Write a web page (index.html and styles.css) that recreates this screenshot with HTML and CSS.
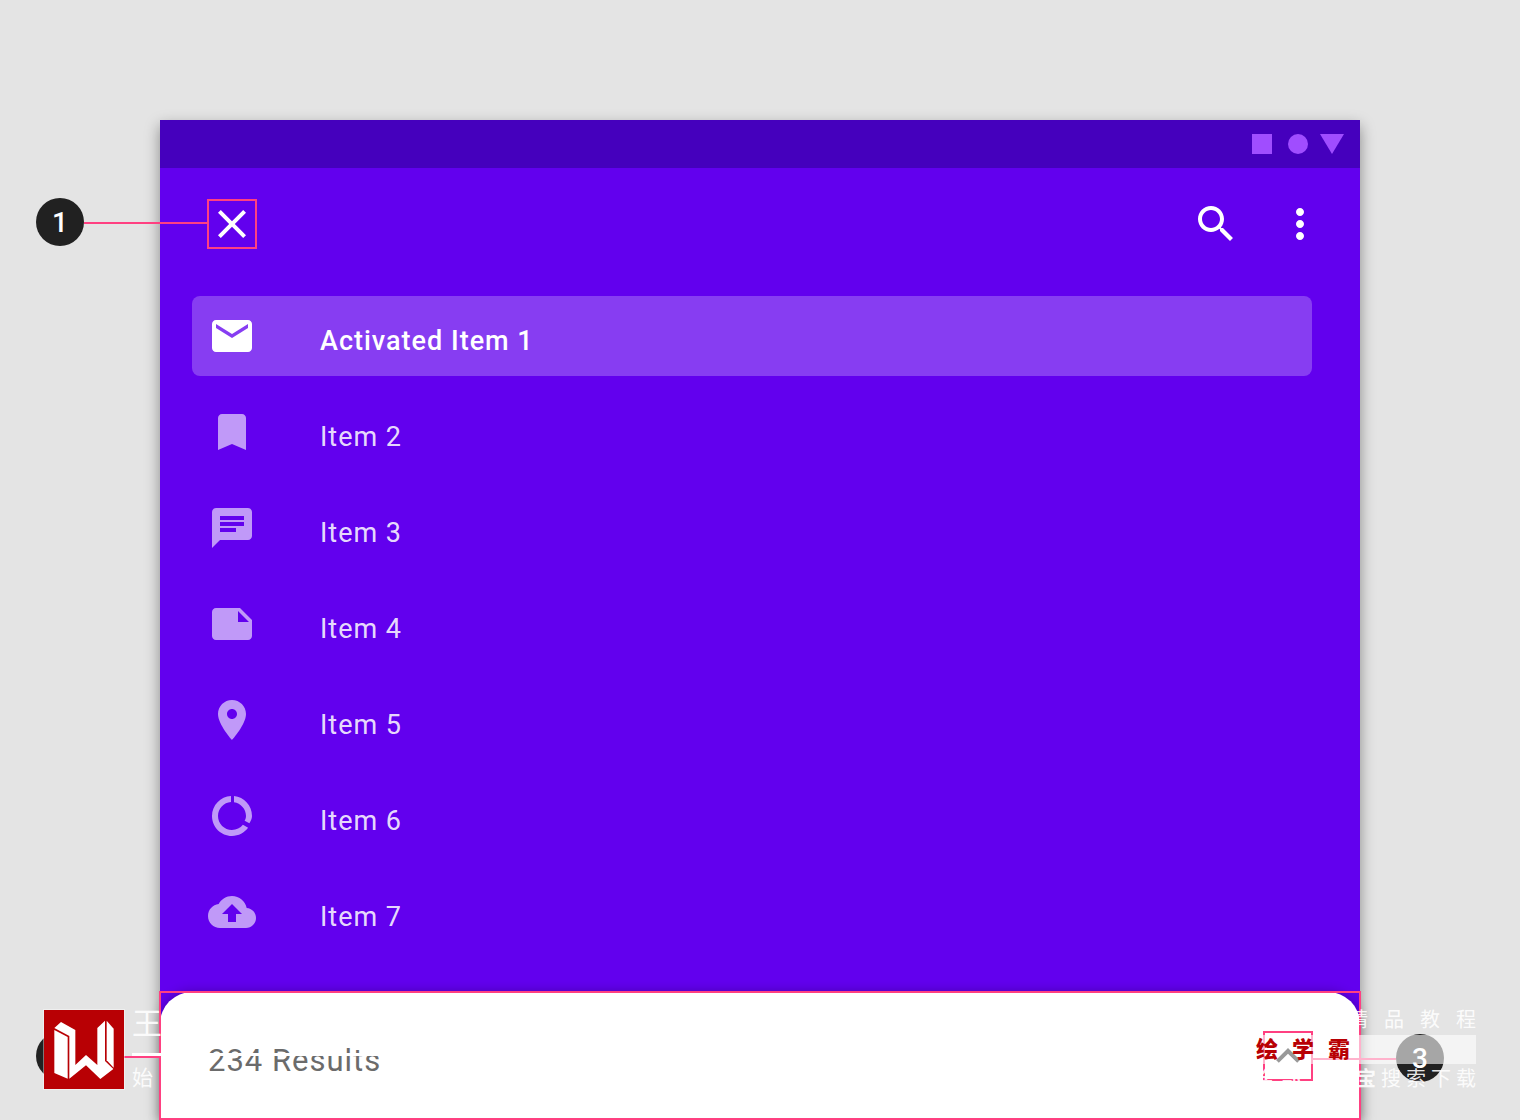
FILE: index.html
```
<!DOCTYPE html>
<html lang="en">
<head>
  <meta charset="UTF-8">
  <meta name="viewport" content="width=device-width, initial-scale=1">
  <title>Backdrop</title>
  <link rel="stylesheet" href="styles.css">
</head>
<body>
  <div class="page">
    <main class="backdrop">
      <div class="status-bar">
        <svg width="92" height="20" viewBox="0 0 92 20" aria-hidden="true">
          <path d="M0 0h20v20H0z"/>
          <circle cx="46" cy="10" r="10"/>
          <path d="M68 0h24L80 20z"/>
        </svg>
      </div>

      <header class="app-bar">
        <div class="callout callout-close"><span class="badge">1</span><span class="line"></span></div>
        <button class="icon-btn marked" aria-label="Close">
          <svg viewBox="0 0 24 24"><path d="M19 6.41L17.59 5 12 10.59 6.41 5 5 6.41 10.59 12 5 17.59 6.41 19 12 13.41 17.59 19 19 17.59 13.41 12z"/></svg>
        </button>
        <div class="actions">
          <button class="icon-btn" aria-label="Search">
            <svg viewBox="0 0 24 24"><path d="M15.5 14h-.79l-.28-.27C15.41 12.59 16 11.11 16 9.5 16 5.91 13.09 3 9.5 3S3 5.91 3 9.5 5.91 16 9.5 16c1.61 0 3.09-.59 4.23-1.57l.27.28v.79l5 4.99L20.49 19l-4.99-5zm-6 0C7.01 14 5 11.99 5 9.5S7.01 5 9.5 5 14 7.01 14 9.5 11.99 14 9.5 14z"/></svg>
          </button>
          <button class="icon-btn" aria-label="More">
            <svg viewBox="0 0 24 24"><path d="M12 8c1.1 0 2-.9 2-2s-.9-2-2-2-2 .9-2 2 .9 2 2 2zm0 2c-1.1 0-2 .9-2 2s.9 2 2 2 2-.9 2-2-.9-2-2-2zm0 6c-1.1 0-2 .9-2 2s.9 2 2 2 2-.9 2-2-.9-2-2-2z"/></svg>
          </button>
        </div>
      </header>

      <nav class="menu">
        <a href="#" class="item active">
          <svg viewBox="0 0 24 24"><path d="M20 4H4c-1.1 0-1.99.9-1.99 2L2 18c0 1.1.9 2 2 2h16c1.1 0 2-.9 2-2V6c0-1.1-.9-2-2-2zm0 4l-8 5-8-5V6l8 5 8-5v2z"/></svg>
          <span>Activated Item 1</span>
        </a>
        <a href="#" class="item">
          <svg viewBox="0 0 24 24"><path d="M17 3H7c-1.1 0-1.99.9-1.99 2L5 21l7-3 7 3V5c0-1.1-.9-2-2-2z"/></svg>
          <span>Item 2</span>
        </a>
        <a href="#" class="item">
          <svg viewBox="0 0 24 24"><path d="M20 2H4c-1.1 0-1.99.9-1.99 2L2 22l4-4h14c1.1 0 2-.9 2-2V4c0-1.1-.9-2-2-2zM6 9h12v2H6V9zm8 5H6v-2h8v2zm4-6H6V6h12v2z"/></svg>
          <span>Item 3</span>
        </a>
        <a href="#" class="item">
          <svg viewBox="0 0 24 24"><path d="M22 10l-6-6H4c-1.1 0-2 .9-2 2v12.01c0 1.1.9 1.99 2 1.99l16-.01c1.1 0 2-.89 2-1.99v-8zm-7-4.5l5.5 5.5H15V5.5z"/></svg>
          <span>Item 4</span>
        </a>
        <a href="#" class="item">
          <svg viewBox="0 0 24 24"><path d="M12 2C8.13 2 5 5.13 5 9c0 5.25 7 13 7 13s7-7.75 7-13c0-3.87-3.13-7-7-7zm0 9.5c-1.38 0-2.5-1.12-2.5-2.5s1.12-2.5 2.5-2.5 2.5 1.12 2.5 2.5-1.12 2.5-2.5 2.5z"/></svg>
          <span>Item 5</span>
        </a>
        <a href="#" class="item">
          <svg viewBox="0 0 24 24"><path d="M13 2.05v3.03c3.39.49 6 3.39 6 6.92 0 .9-.3 1.6-.7 2.4l2.4 1.2c.7-1.1 1.3-2.2 1.3-3.6 0-5.18-3.95-9.45-9-9.95zM12 19c-3.87 0-7-3.13-7-7 0-3.7 2.86-6.74 6.5-6.98V2.02C6.22 2.28 2 6.64 2 12c0 5.52 4.47 10 9.99 10 3.31 0 6.24-1.61 8.06-4.09l-2.6-1.53C16.17 17.98 14.21 19 12 19z"/></svg>
          <span>Item 6</span>
        </a>
        <a href="#" class="item">
          <svg viewBox="0 0 24 24"><path d="M19.35 10.04C18.67 6.59 15.64 4 12 4 9.11 4 6.6 5.64 5.35 8.04 2.34 8.36 0 10.91 0 14c0 3.31 2.69 6 6 6h13c2.76 0 5-2.24 5-5 0-2.64-2.05-4.78-4.65-4.96zM14 13v4h-4v-4H7l5-5 5 5h-3z"/></svg>
          <span>Item 7</span>
        </a>
      </nav>

      <section class="sheet">
        <div class="callout callout-sheet"><span class="badge">2</span><span class="line"></span></div>
        <div class="callout callout-expand"><span class="line"></span><span class="badge">3</span></div>
        <h2>234 Results</h2>
        <button class="icon-btn marked" aria-label="Expand results">
          <svg viewBox="0 0 24 24"><path d="M12 8l-6 6 1.41 1.41L12 10.83l4.59 4.58L18 14z"/></svg>
        </button>
      </section>
    </main>

    <!-- watermark, left side -->
    <div class="mark mark-left">
      <svg class="mark-logo" viewBox="42 30 240 237" aria-hidden="true">
        <path fill="#b80004" d="M42 30h240v237H42z"/>
        <g fill="#fff">
          <path d="M73 84L93 66l43 24v105l32-30 34 30V84l23-22v121l25 24-39 30-43-41-50 40V108z"/>
          <path d="M73 90l40 21v125l-40-17z"/>
          <path d="M230 62l21 24v117l-21-22z"/>
        </g>
      </svg>
      <div class="mark-lines">
        <span class="mark-title">王</span>
        <span class="mark-rule"></span>
        <span class="mark-note">始</span>
      </div>
    </div>

    <!-- watermark, right side -->
    <div class="mark mark-right">
      <span class="mark-top">精品教程</span>
      <span class="mark-name">绘学霸</span>
      <span class="mark-bottom"><b>全部上淘宝</b>搜索下载</span>
    </div>
  </div>
</body>
</html>
```

FILE: styles.css
```
* {
  box-sizing: border-box;
}
body {
  margin: 0;
  background-color: #e4e4e4;
  font-family: Roboto, "Noto Sans CJK SC", sans-serif;
}
.page {
  position: relative;
  padding: 120px 160px 0;
  overflow: hidden;
}
.backdrop {
  background-color: #6200ee;
  box-shadow: 0 6px 14px rgba(0,0,0,0.4);
}
.status-bar {
  display: flex;
  align-items: center;
  justify-content: flex-end;
  height: 48px;
  padding: 0 16px;
  background-color: #4500bd;
}
.status-bar svg {
  fill: #a04dff;
}

/* app bar */
.app-bar {
  position: relative;
  display: flex;
  justify-content: space-between;
  padding: 32px 36px 48px 48px;
}
.actions {
  display: flex;
  gap: 36px;
}
.icon-btn {
  display: block;
  width: 48px;
  height: 48px;
  padding: 0;
  border: none;
  background: none;
  fill: #fff;
  cursor: pointer;
}
.icon-btn svg {
  display: block;
}
.marked {
  outline: 2px solid #ff4081;
  outline-offset: -1px;
}

/* menu */
.menu {
  display: flex;
  flex-direction: column;
  gap: 16px;
  padding: 0 48px 40px 32px;
}
.item {
  display: flex;
  align-items: center;
  gap: 64px;
  height: 80px;
  padding: 0 16px;
  border-radius: 8px;
  color: rgba(255,255,255,0.87);
  font-size: 27px;
  line-height: 32px;
  letter-spacing: 1px;
  text-decoration: none;
}
.item svg {
  width: 48px;
  height: 48px;
  fill: rgba(255,255,255,0.6);
}
.item span {
  padding-top: 10px;
}
.item.active {
  background-color: rgba(255,255,255,0.24);
  color: #fff;
  font-weight: 500;
}
.item.active svg {
  fill: #fff;
}

/* front layer */
.sheet {
  position: relative;
  display: flex;
  align-items: center;
  justify-content: space-between;
  height: 128px;
  padding: 0 48px;
  border-radius: 32px 32px 0 0;
  background-color: #fff;
  box-shadow: 0 0 12px rgba(0,0,0,0.3);
}
.sheet::after {
  content: "";
  position: absolute;
  inset: -1px -1px 0;
  border: 2px solid #ff4081;
  pointer-events: none;
}
.sheet h2 {
  margin: 0;
  padding-top: 10px;
  color: #6b6b6b;
  font-size: 31px;
  line-height: 40px;
  font-weight: 400;
  letter-spacing: 1px;
}
.sheet .icon-btn {
  fill: #000;
}

/* numbered callouts */
.callout {
  position: absolute;
  display: flex;
  align-items: center;
}
.callout-close {
  top: 30px;
  left: -124px;
  width: 172px;
}
.callout-sheet {
  top: 40px;
  left: -124px;
  width: 124px;
}
.callout-expand {
  top: 42px;
  right: -84px;
  width: 132px;
}
.badge {
  width: 48px;
  height: 48px;
  padding-top: 1px;
  border-radius: 50%;
  background-color: #212121;
  color: #fff;
  font-size: 28px;
  line-height: 48px;
  font-weight: 500;
  text-align: center;
}
.line {
  flex: 1;
  height: 2px;
  margin-top: 2px;
  background-color: #ff4081;
}

/* watermark */
.mark {
  position: absolute;
  display: flex;
  color: rgba(255,255,255,0.9);
  white-space: nowrap;
  pointer-events: none;
}
.mark-left {
  left: 44px;
  bottom: 31px;
  align-items: flex-start;
  gap: 8px;
}
.mark-logo {
  width: 80px;
  height: 79px;
  outline: 1px solid rgba(255,255,255,0.4);
}
.mark-lines {
  display: flex;
  flex-direction: column;
}
.mark-title {
  font-size: 30px;
  line-height: 28px;
}
.mark-rule {
  width: 260px;
  height: 3px;
  margin: 15px 0 12px;
  background-color: #fff;
}
.mark-note {
  font-size: 21px;
  line-height: 21px;
}
.mark-right {
  right: 44px;
  bottom: 26px;
  flex-direction: column;
  width: 340px;
  font-size: 20px;
}
.mark-top {
  align-self: flex-end;
  margin-right: -16px;
  line-height: 30px;
  letter-spacing: 16px;
}
.mark-name {
  height: 29px;
  padding-left: 120px;
  background-color: rgba(255,255,255,0.6);
  color: #b80004;
  font-size: 22px;
  line-height: 30px;
  font-weight: 900;
  letter-spacing: 14px;
}
.mark-bottom {
  align-self: flex-end;
  margin-right: -5px;
  line-height: 30px;
  letter-spacing: 5px;
}
```
